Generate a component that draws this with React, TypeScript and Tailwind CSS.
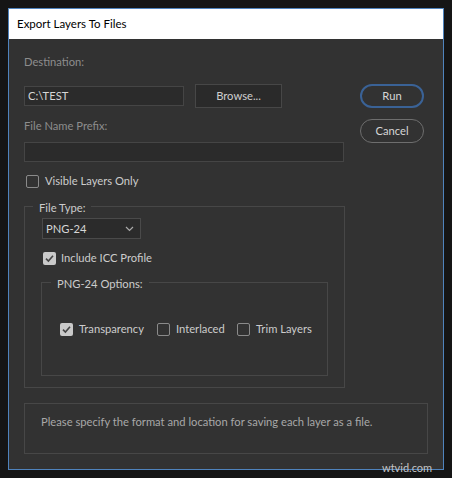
import React from "react";

function Check({ checked }: { checked?: boolean }) {
  return checked ? (
    <span className="block w-[13px] h-[13px] bg-[#c9c9c9] rounded-[2px] flex items-center justify-center shrink-0">
      <svg width="11" height="11" viewBox="0 0 11 11">
        <path d="M2 5.6 L4.4 8 L9 2.8" fill="none" stroke="#444" strokeWidth="1.6" />
      </svg>
    </span>
  ) : (
    <span className="block w-[13px] h-[13px] border border-[#8a8a8a] rounded-[2px] shrink-0" />
  );
}

export default function App() {
  return (
    <div
      className="relative w-[452px] h-[478px] bg-[#151515] pt-[8px] pl-[8px] text-[11.2px] leading-[16px]"
      style={{ fontFamily: 'Lato, "Noto Sans", sans-serif' }}
    >
      <div className="w-[436px] h-[462px] border border-[#4f83bd] bg-[#323232] flex flex-col">
        <div className="h-[30px] bg-white flex items-center pl-[8px] text-black text-[11.5px]">Export Layers To Files</div>
        <div className="pl-[15px] flex flex-col">
          <div className="flex">
            <div className="w-[321px] flex flex-col">
              <div className="mt-[15px] text-[#8d8d8d]">Destination:</div>
              <div className="mt-[14px] h-[24px] flex items-center">
                <div className="w-[160px] h-[20px] border border-[#454545] bg-[#2b2b2b] pl-[3px] flex items-center text-[#d6d6d6]">
                  C:\TEST
                </div>
                <div className="ml-[11px] w-[87px] h-[24px] border border-[#474747] bg-[#2a2a2a] flex items-center justify-center text-[#cfcfcf]">
                  Browse...
                </div>
              </div>
              <div className="mt-[10px] text-[#8d8d8d]">File Name Prefix:</div>
              <div className="mt-[8px] w-[320px] h-[20px] border border-[#454545] bg-[#2b2b2b]" />
              <div className="mt-[11px] flex items-center">
                <span className="ml-[2px]">
                  <Check />
                </span>
                <span className="ml-[6px] text-[#cccccc]">Visible Layers Only</span>
              </div>
              <fieldset className="mt-[7px] w-[321px] h-[192px] border border-[#474747] p-0 m-0">
                <legend className="ml-[8px] px-[6px] pt-[4px] text-[#cccccc]">File Type:</legend>
                <div className="pl-[17px] flex flex-col">
                  <div className="mt-[2px] w-[99px] h-[21px] border border-[#4a4a4a] bg-[#2b2b2b] flex items-center pl-[3px] pr-[6px] justify-between text-[#d6d6d6]">
                    <span>PNG-24</span>
                    <svg width="9" height="6" viewBox="0 0 9 6">
                      <path d="M1 1 L4.5 4.5 L8 1" fill="none" stroke="#aaa" strokeWidth="1.2" />
                    </svg>
                  </div>
                  <div className="mt-[11px] flex items-center">
                    <span className="ml-[1px]">
                      <Check checked />
                    </span>
                    <span className="ml-[5px] text-[#cccccc]">Include ICC Profile</span>
                  </div>
                  <fieldset className="mt-[6px] -ml-[1px] w-[287px] h-[104px] border border-[#474747] p-0 m-0">
                    <legend className="ml-[9px] px-[6px] pt-[4px] text-[#cccccc]">PNG-24 Options:</legend>
                    <div className="mt-[29px] pl-[18px] flex items-center text-[#cccccc]">
                      <div className="w-[97px] flex items-center">
                        <Check checked />
                        <span className="ml-[6px]">Transparency</span>
                      </div>
                      <div className="w-[80px] flex items-center">
                        <Check />
                        <span className="ml-[6px]">Interlaced</span>
                      </div>
                      <div className="flex items-center">
                        <Check />
                        <span className="ml-[6px]">Trim Layers</span>
                      </div>
                    </div>
                  </fieldset>
                </div>
              </fieldset>
            </div>
            <div className="ml-[15px] flex flex-col">
              <div className="mt-[45px] w-[64px] h-[24px] rounded-full border-2 border-[#3a6296] flex items-center justify-center text-[#d6d6d6]">
                Run
              </div>
              <div className="mt-[11px] w-[64px] h-[24px] rounded-full border border-[#6e6e6e] flex items-center justify-center text-[#d6d6d6]">
                Cancel
              </div>
            </div>
          </div>
          <div className="mt-[15px] w-[404px] h-[51px] border border-[#474747] pl-[16px] pt-[10px] text-[#a8a8a8]">
            Please specify the format and location for saving each layer as a file.
          </div>
        </div>
      </div>
      <div className="absolute left-[382px] top-[461px] text-[11px] leading-[14px] text-[#c4c4c4]">wtvid.com</div>
    </div>
  );
}
